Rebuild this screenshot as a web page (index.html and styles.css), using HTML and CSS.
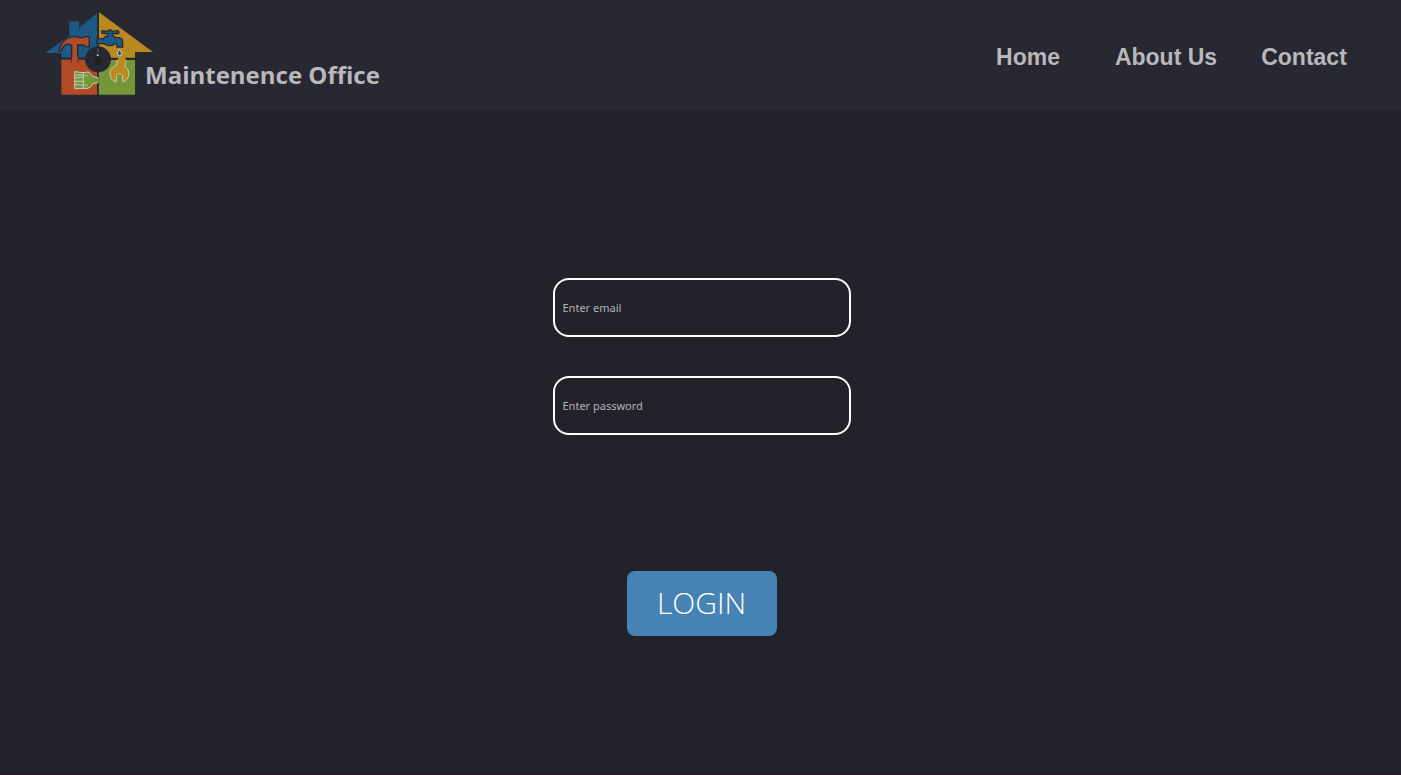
FILE: index.html
```html
<!DOCTYPE html>
<html lang="en">
<head>
<meta charset="utf-8">
<title>Maintenence Office</title>
<link rel="stylesheet" href="styles.css">
</head>
<body>
<header class="header">
  <a class="brand" href="#">
    <svg class="logo" viewBox="15 20 324 252" aria-hidden="true">
      <path fill="#1c5a86" d="M172 22V157H65V143H16L88 91V48H117V67Z"/>
      <path fill="#ba8a20" d="M177 21L339 140H285V159H177Z"/>
      <path fill="#b24b27" d="M64 162H172V268H64Z"/>
      <path fill="#729638" d="M174 164H285V268H174Z"/>
      <path fill="none" stroke="#282832" stroke-width="5" d="M174 20V270M62 160H287"/>
      <path fill="#b24b27" stroke="#282832" stroke-width="4" d="M57 137C61 112 80 93 108 94L118 97H130L136 94H148V124H136L130 119H113V170H95V120L86 116C75 117 67 125 64 137Z"/>
      <path fill="#b24b27" d="M95 155H113V175H95Z"/>
      <path fill="#1c5a86" stroke="#282832" stroke-width="4" d="M171 100H190Q195 92 204 91V85H190Q185 85 185 80Q185 75 190 76L204 78Q210 68 216 78L232 76Q237 77 237 81Q237 86 231 85H217V91Q223 92 226 97H237Q248 98 248 110V125H231V117Q230 114 225 115Q221 121 210 121Q198 121 193 115H171Z"/>
      <path fill="#1c5a86" stroke="#d4d4c8" stroke-width="3" d="M238 132Q232 140 232 145A6 6 0 0 0 245 145Q245 140 238 132Z"/>
      <path fill="#ba8a20" stroke="#d0cdb8" stroke-width="3" d="M232 164H258L255 184C267 191 271 210 260 222Q255 230 248 229V210Q244 205 238 205Q231 206 229 211V229C213 228 205 207 213 193Q217 186 226 183Q232 177 232 164Z"/>
      <path fill="#ba8a20" d="M234 154H256V177H234Z"/>
      <path fill="#729638" stroke="#c8cfb4" stroke-width="3" d="M104 199L130 202L144 200Q154 203 157 213L174 217V232L158 235Q152 248 144 249L104 250Z"/>
      <path fill="#729638" d="M168 219H182V231H168Z"/>
      <path fill="none" stroke="#c8cfb4" stroke-width="3" d="M130 201V249M105 209H130M105 218L130 215M105 228H130M105 237L130 240M134 211H143M134 239H143"/>
      <circle cx="174" cy="162" r="39" fill="#282832"/>
      <path fill="#202027" d="M173 144L178 153Q187 158 185 170Q182 179 173 180Q162 179 161 169Q160 158 169 153Z"/>
      <path fill="none" stroke="#777780" stroke-width="2" d="M170 130L176 132L173 141"/>
      <circle cx="173" cy="150" r="3" fill="#d5d5d5"/>
      <path fill="none" stroke="#76756a" stroke-width="2" opacity=".6" d="M81 131L85 126V137M258 135L264 129M263 137L269 131M174 207H181V216"/>
    </svg>
    <span class="brand-name">Maintenence Office</span>
  </a>
  <nav class="nav">
    <a href="#">Home</a>
    <a href="#">About Us</a>
    <a href="#">Contact</a>
  </nav>
</header>
<main class="main">
  <form class="login">
    <input class="field" type="email" placeholder="Enter email" aria-label="Enter email">
    <input class="field" type="password" placeholder="Enter password" aria-label="Enter password">
    <button class="submit" type="button">LOGIN</button>
  </form>
</main>
</body>
</html>
```
FILE: styles.css
```css
* {
  box-sizing: border-box;
}

body {
  display: flex;
  flex-direction: column;
  min-height: 100vh;
  margin: 0;
  border-bottom: 2px solid #211a26;
  background: #22222b;
  color: #b9b9bb;
  font-family: "Segoe UI", "Noto Sans", sans-serif;
}

a {
  color: inherit;
  text-decoration: none;
}

.header {
  display: flex;
  justify-content: space-between;
  align-items: flex-start;
  padding: 12px 28px 14px 45px;
  background: #282832;
}

.brand {
  display: flex;
  align-items: flex-end;
}

.logo {
  width: 108px;
  height: 84px;
}

.brand-name {
  margin: 0 0 5px -8px;
  font-family: "Segoe UI", "Open Sans", sans-serif;
  font-size: 24px;
  font-weight: 700;
  line-height: 32px;
}

.nav {
  display: grid;
  grid-template-columns: repeat(3, 138px);
  padding-top: 30px;
  font-family: Arial, "Liberation Sans", sans-serif;
  font-size: 23px;
  font-weight: 700;
  line-height: 30px;
  text-align: center;
}

.main {
  display: flex;
  flex: 1;
  justify-content: center;
  padding: 168px 0 80px 2px;
}

.login {
  display: flex;
  flex-direction: column;
  align-items: center;
}

.field {
  width: 298px;
  height: 59px;
  margin-bottom: 39px;
  padding: 0 8px;
  border: 2px solid #fff;
  border-radius: 16px;
  background: transparent;
  color: #fff;
  font-family: "Segoe UI", "Noto Sans", sans-serif;
  font-size: 11px;
}

.field::placeholder {
  color: #b4b4b4;
}

.submit {
  width: 150px;
  height: 65px;
  margin-top: 97px;
  padding: 0 0 2px;
  border: 0;
  border-radius: 8px;
  background: #4682b4;
  color: #fff;
  font-family: "Segoe UI Light", "Open Sans", sans-serif;
  font-size: 30px;
  font-weight: 300;
}
```
